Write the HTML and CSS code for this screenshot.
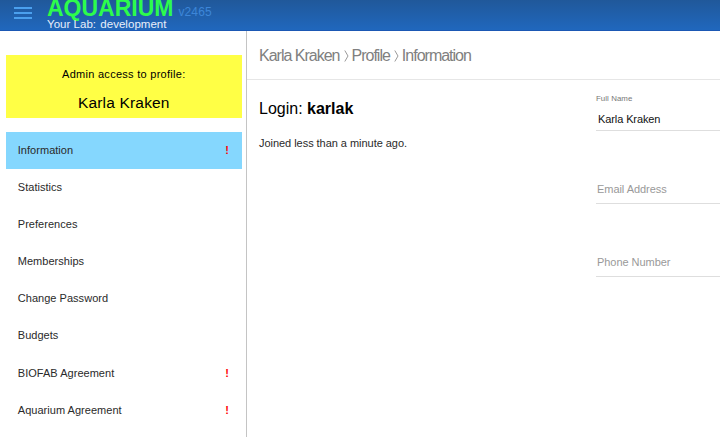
FILE: index.html
```html
<!DOCTYPE html>
<html lang="en">
<head>
<meta charset="utf-8">
<title>Aquarium</title>
<link rel="stylesheet" href="styles.css">
</head>
<body>
<header class="topbar">
  <svg class="menu-icon" viewBox="0 0 18 12"><path d="M0 1h18M0 6h18M0 11h18" stroke="currentColor" stroke-width="1.8"/></svg>
  <div class="brand">
    <div class="brand-line"><span class="logo">AQUARIUM</span><span class="version">v2465</span></div>
    <div class="lab">Your Lab: <span class="lab-name">development</span></div>
  </div>
</header>
<div class="layout">
  <aside class="sidebar">
    <div class="admin">
      <div class="admin-label">Admin access to profile:</div>
      <div class="admin-name">Karla Kraken</div>
    </div>
    <nav class="menu">
      <a class="item active"><span>Information</span><b class="alert">!</b></a>
      <a class="item"><span>Statistics</span></a>
      <a class="item"><span>Preferences</span></a>
      <a class="item"><span>Memberships</span></a>
      <a class="item"><span>Change Password</span></a>
      <a class="item"><span>Budgets</span></a>
      <a class="item"><span>BIOFAB Agreement</span><b class="alert">!</b></a>
      <a class="item"><span>Aquarium Agreement</span><b class="alert">!</b></a>
    </nav>
  </aside>
  <main class="main">
    <div class="crumbs">
      <span>Karla Kraken</span>
      <svg class="sep" viewBox="0 0 5 12"><path d="M.8.5 4 6 .8 11.5" fill="none" stroke="currentColor" stroke-width=".8"/></svg>
      <span>Profile</span>
      <svg class="sep" viewBox="0 0 5 12"><path d="M.8.5 4 6 .8 11.5" fill="none" stroke="currentColor" stroke-width=".8"/></svg>
      <span>Information</span>
    </div>
    <div class="content">
      <section class="info">
        <h1 class="login">Login: <b>karlak</b></h1>
        <p class="joined">Joined less than a minute ago.</p>
      </section>
      <form class="fields">
        <div class="field"><label class="label">Full Name</label><div class="value">Karla Kraken</div></div>
        <div class="field"><div class="placeholder">Email Address</div></div>
        <div class="field"><div class="placeholder">Phone Number</div></div>
      </form>
    </div>
  </main>
</div>
</body>
</html>
```

FILE: styles.css
```css
* { box-sizing: border-box; }
body {
  margin: 0;
  height: 437px;
  overflow: hidden;
  display: flex;
  flex-direction: column;
  background: #fff;
  color: #2a2a2a;
  font-family: "Liberation Sans", Arial, sans-serif;
  font-size: 11px;
}
.topbar {
  flex: none;
  height: 31px;
  display: flex;
  overflow: hidden;
  padding-left: 14px;
  background: linear-gradient(#20589a, #2067bd);
  border-bottom: 1px solid #1b58b4;
}
.menu-icon { width: 18px; height: 12px; margin-top: 7px; color: #4ba0ee; }
.brand { margin-left: 15px; }
.brand-line { display: flex; align-items: baseline; height: 17px; line-height: 17px; }
.logo { color: #2dfb4c; font-size: 23px; font-weight: bold; }
.version { margin-left: 5px; color: #3d86d8; font-size: 12px; letter-spacing: .1px; }
.lab { color: #e8effa; font-size: 11.5px; line-height: 14px; letter-spacing: .03px; white-space: nowrap; }
.lab-name { margin-left: 1px; }
.layout { flex: 1; display: flex; min-height: 0; }
.sidebar {
  flex: none;
  width: 247px;
  padding: 24px 4px 0 5.6px;
  border-right: 1px solid #c4c4c4;
}
.admin {
  height: 63px;
  padding-top: 12px;
  background: #ffff45;
  color: #000;
  text-align: center;
}
.admin-label { line-height: 14px; letter-spacing: .28px; }
.admin-name { margin-top: 12px; font-size: 15.5px; line-height: 20px; letter-spacing: .18px; }
.menu { margin-top: 13.6px; }
.item {
  display: flex;
  align-items: center;
  justify-content: space-between;
  height: 37.15px;
  padding: 0 13px 1px 12.2px;
  letter-spacing: .03px;
}
.active { background: #85d7fe; }
.alert { color: #f00; }
.main { flex: 1; min-width: 0; }
.crumbs {
  height: 49px;
  padding: 1px 0 0 12px;
  display: flex;
  align-items: center;
  border-bottom: 1px solid #e6e6e6;
  color: #808080;
  font-size: 16px;
  letter-spacing: -1px;
  white-space: nowrap;
}
.sep { width: 5px; height: 12px; margin: 0 3px 0 4px; }
.content { display: flex; }
.info { flex: none; width: 349px; padding: 19px 0 0 12px; }
.login { margin: 0; font-size: 16px; line-height: 20px; font-weight: normal; color: #000; }
.joined { margin: 17px 0 0; line-height: 14px; letter-spacing: -.04px; }
.fields { flex: 1; min-width: 0; padding-top: 10px; }
.field { height: 73px; display: flex; flex-direction: column; justify-content: flex-end; border-bottom: 1px solid #dedede; }
.field:first-child { height: 41px; }
.label { margin-bottom: 8px; font-size: 7.9px; line-height: 10px; color: #777; letter-spacing: .05px; }
.value { padding: 0 0 4px 2px; line-height: 14px; color: #111; letter-spacing: -.1px; }
.placeholder { padding: 0 0 7px 1px; line-height: 14px; color: #999; letter-spacing: -.05px; }
```
